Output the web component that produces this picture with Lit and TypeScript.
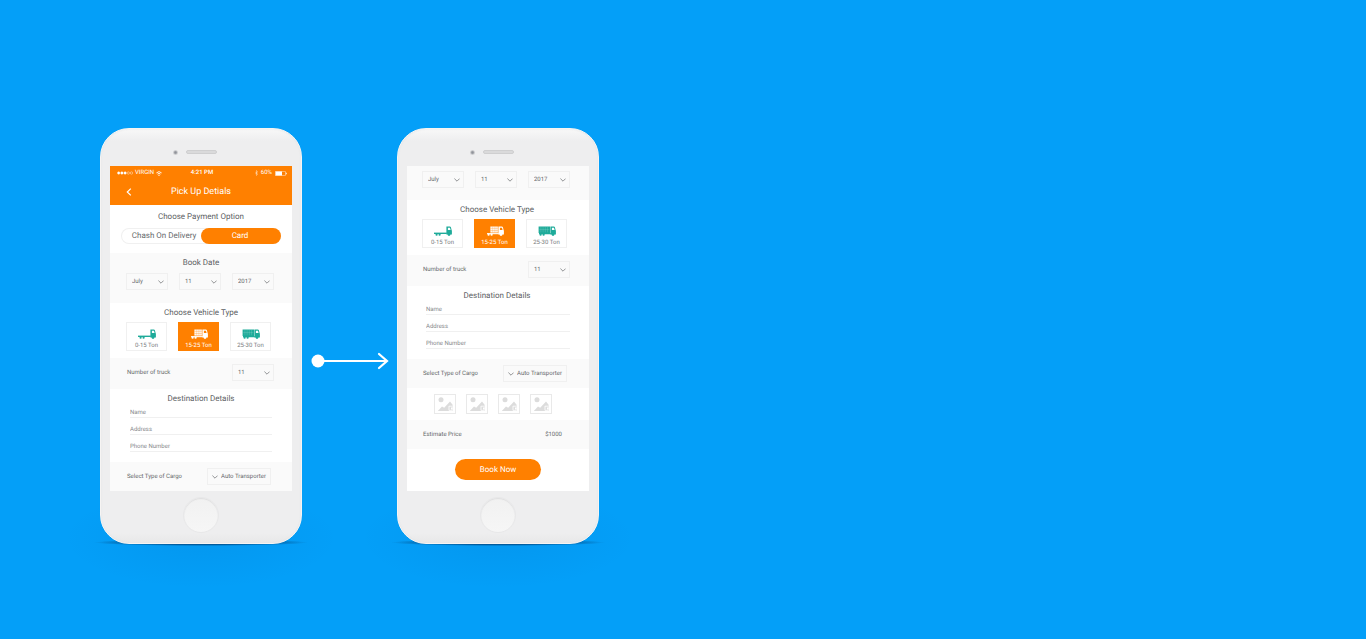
import { LitElement, html, css, svg, nothing } from "lit";
import { customElement, property } from "lit/decorators.js";
import { classMap } from "lit/directives/class-map.js";

const chevron = html`<svg class="chevron" viewBox="0 0 6 4" aria-hidden="true">
  <path d="M0.4 0.6 3 3.2 5.6 0.6" fill="none" stroke="currentColor" stroke-width="0.8" />
</svg>`;

const cab = svg`
  <path fill-rule="evenodd" d="M12.4 0.4h3.4c.6 0 .9.2 1.1.8l.7 2.7c.2.3.3.6.3 1v3.5h-5.5zM13.9 1.7v2.2h2.7l-.5-1.7c-.1-.4-.3-.5-.6-.5z" />
  <circle cx="15" cy="8.5" r="1.4" />`;

const wheels = svg`
  <circle cx="2.6" cy="8.7" r="1.1" />
  <circle cx="5.6" cy="8.7" r="1.1" />`;

const trucks = {
  flat: svg`<path d="M0 6.6h12.8v1.4H0z" />${wheels}${cab}`,
  box: svg`<path d="M1 7.1h11.8v1.1H1z" />
    <path d="M4.4 0.5h7.4v6.1H4.4z" />
    <path d="M6.3 0.5v6.1M8.2 0.5v6.1M10 0.5v6.1M4.4 2.4h7.4M4.4 4.5h7.4" stroke="#ff8000" stroke-opacity="0.55" stroke-width="0.5" />
    ${wheels}${cab}`,
  long: svg`<path d="M0.6 0.4h11.4v6.5H0.6zM1 7.1h11.8v1.1H1z" />
    <path d="M2.9 1v5.3M5.1 1v5.3M7.3 1v5.3M9.5 1v5.3M1.2 3.6h10.2" stroke="#fff" stroke-opacity="0.35" stroke-width="0.4" />
    ${wheels}${cab}`,
};

@customElement("phone-frame")
class PhoneFrame extends LitElement {
  static styles = css`
    :host {
      display: block;
      position: relative;
      flex: none;
      width: 202px;
    }
    .glow,
    .contact {
      position: absolute;
      border-radius: 50%;
    }
    .glow {
      left: -36px;
      right: -36px;
      bottom: -44px;
      height: 100px;
      background: radial-gradient(closest-side, rgba(0, 60, 130, 0.08), rgba(0, 60, 130, 0));
    }
    .contact {
      left: -6px;
      right: -6px;
      bottom: -2px;
      height: 7px;
      background: radial-gradient(closest-side, rgba(0, 50, 100, 0.6) 60%, rgba(0, 50, 100, 0));
    }
    .body {
      position: relative;
      box-sizing: border-box;
      border: 1px solid #f6f4f3;
      border-radius: 29px;
      padding: 0 9px;
      background: linear-gradient(#f8f8f8, #eeeeef 12px, #eeeeef 404px, #e8e8e8);
      box-shadow: inset 0 0 2px #e2e2e2;
    }
    .top {
      display: grid;
      grid-template-columns: 1fr auto 1fr;
      align-items: center;
      column-gap: 8px;
      height: 37px;
      padding-top: 9px;
      box-sizing: border-box;
    }
    .camera {
      justify-self: end;
      width: 5px;
      height: 5px;
      border-radius: 50%;
      background: radial-gradient(#8f9299 20%, #d2d2d4 60%);
    }
    .speaker {
      width: 31px;
      height: 4px;
      box-sizing: border-box;
      border: 1px solid #cfcfd0;
      border-radius: 2px;
      background: #dadadb;
    }
    .screen {
      height: 325px;
      overflow: hidden;
      background: #fff;
    }
    .bottom {
      display: grid;
      place-items: center;
      height: 52px;
      padding-bottom: 4px;
      box-sizing: border-box;
    }
    .home {
      width: 36px;
      height: 36px;
      padding: 0;
      box-sizing: border-box;
      border: 1px solid #e8e8e9;
      border-radius: 50%;
      background: linear-gradient(#f1f1f1, #f6f6f6);
      box-shadow: inset 0 1px 1px #dededf;
    }
  `;

  render() {
    return html`
      <div class="glow"></div>
      <div class="contact"></div>
      <div class="body">
        <div class="top"><span class="camera"></span><span class="speaker"></span></div>
        <div class="screen"><slot></slot></div>
        <div class="bottom"><button class="home" aria-label="Home"></button></div>
      </div>
    `;
  }
}

@customElement("booking-form")
class BookingForm extends LitElement {
  @property({ type: Boolean, reflect: true }) scrolled = false;

  static styles = css`
    :host {
      --lead: 16px;
      --trail: 18px;
      display: block;
      color: #66696c;
      font: 6px/8px Roboto, sans-serif;
      text-rendering: geometricPrecision;
    }
    :host([scrolled]) {
      --lead: 15px;
      --trail: 19px;
    }
    * {
      box-sizing: border-box;
    }
    input,
    select,
    button {
      font: inherit;
      color: inherit;
      text-rendering: inherit;
    }
    header {
      background: #ff8000;
      color: #fff;
    }
    .status {
      display: grid;
      grid-template-columns: 1fr auto 1fr;
      align-items: center;
      height: 14px;
      padding: 0 5px 0 7px;
    }
    .carrier,
    .power {
      display: flex;
      align-items: center;
      gap: 2px;
    }
    .power {
      justify-content: flex-end;
      gap: 3px;
    }
    .clock {
      font-weight: 500;
    }
    .dots {
      width: 16px;
      height: 4px;
    }
    .wifi {
      width: 6px;
      height: 5px;
    }
    .bluetooth {
      width: 3px;
      height: 6px;
    }
    .battery {
      width: 12px;
      height: 5px;
    }
    .nav {
      display: grid;
      grid-template-columns: 38px 1fr 38px;
      align-items: center;
      height: 25px;
      padding-bottom: 2px;
    }
    .back {
      display: grid;
      place-items: center;
      padding: 0;
      border: 0;
      background: none;
    }
    .back svg {
      width: 6px;
      height: 8px;
    }
    h1 {
      margin: 0;
      text-align: center;
      font-weight: 400;
      font-size: 9px;
      line-height: 12px;
    }
    h2 {
      margin: 0;
      text-align: center;
      font-weight: 400;
      font-size: 8px;
      line-height: 10px;
      color: #5c6063;
    }
    section {
      padding: 5px 0 0 var(--lead);
    }
    section h2 {
      padding-right: calc(var(--trail) - 2px);
    }
    .tint {
      background: #fafafa;
    }
    .payment {
      padding: 7px 11px 9px;
    }
    .payment h2 {
      padding: 0;
    }
    .toggle {
      display: grid;
      grid-template-columns: 1fr 1fr;
      height: 16px;
      margin-top: 6px;
      border-radius: 8px;
      box-shadow: inset 0 0 0 1px #f0f0f0;
      font-size: 8px;
    }
    .toggle label {
      display: grid;
      place-items: center;
      padding-left: 6px;
      border-radius: 8px;
    }
    .toggle .on {
      padding: 0 2px 0 0;
      background: #ff8000;
      color: #fff;
    }
    input[type="radio"] {
      position: absolute;
      opacity: 0;
      width: 1px;
      height: 1px;
      margin: 0;
    }
    .date {
      padding-bottom: 13px;
    }
    .date h2 {
      margin-bottom: 5px;
    }
    :host([scrolled]) .date {
      padding-bottom: 12px;
    }
    .row {
      display: flex;
      gap: 11px;
    }
    .pick {
      display: grid;
      align-items: center;
      width: 42px;
      height: 17px;
      border: 1px solid #f0f0f0;
    }
    .pick select,
    .pick .chevron {
      grid-area: 1 / 1;
    }
    .pick select {
      appearance: none;
      width: 100%;
      height: 15px;
      padding: 1px 0 0 5px;
      border: 0;
      background: none;
    }
    .chevron {
      width: 6px;
      height: 4px;
      justify-self: end;
      margin-right: 3px;
      color: #777a7c;
      pointer-events: none;
    }
    .pick.cargo {
      width: 64px;
      margin-right: 3px;
    }
    .cargo .chevron {
      justify-self: start;
      margin-left: 4px;
    }
    .cargo select {
      padding-left: 13px;
    }
    .vehicle {
      padding-bottom: 7px;
    }
    .vehicle .row {
      margin-top: 4px;
    }
    .truck {
      display: flex;
      flex-direction: column;
      align-items: center;
      width: 41px;
      height: 29px;
      padding-top: 6px;
      border: 1px solid #f0f0f0;
      color: #7a7d80;
      white-space: nowrap;
    }
    .truck svg {
      width: 18px;
      height: 10px;
      margin-bottom: 3px;
      fill: #1fab9a;
    }
    .truck.on {
      border-color: #ff8000;
      background: #ff8000;
      color: #fff;
    }
    .truck.on svg {
      fill: #fff;
    }
    .line {
      display: flex;
      align-items: center;
      justify-content: space-between;
      height: 31px;
      padding: 0 var(--trail) 2px calc(var(--lead) + 1px);
    }
    .line.short {
      height: 29px;
      padding-bottom: 0;
    }
    .fields {
      display: grid;
      gap: 3px;
      padding: 0 4px 10px 4px;
      margin-right: var(--lead);
    }
    .fields input {
      width: 100%;
      height: 14px;
      padding: 4px 0 0;
      border: 0;
      border-bottom: 1px solid #f0f0f0;
      border-radius: 0;
      background: none;
    }
    .fields input::placeholder {
      color: #85888a;
      opacity: 1;
    }
    .thumbs {
      display: flex;
      justify-content: center;
      gap: 10px;
      padding: 6px 11px 6px 0;
    }
    .thumbs svg {
      width: 22px;
      height: 20px;
    }
    .line .price {
      padding-right: 8px;
    }
    .submit {
      display: block;
      width: 86px;
      height: 21px;
      margin: 10px auto 0;
      padding: 0;
      border: 0;
      border-radius: 11px;
      background: #ff8000;
      color: #fff;
      font-size: 8px;
    }
  `;

  private pick(label: string, value: string, kind = "") {
    return html`<label class="pick ${kind}">
      <select aria-label=${label}><option>${value}</option></select>${chevron}
    </label>`;
  }

  private truck(kind: keyof typeof trucks, label: string, on = false) {
    return html`<label class=${classMap({ truck: true, on })}>
      <input type="radio" name="vehicle" .checked=${on} />
      <svg viewBox="0 0 18 10" aria-hidden="true">${trucks[kind]}</svg>
      ${label}
    </label>`;
  }

  private top() {
    return html`
      <header>
        <div class="status">
          <span class="carrier">
            <svg class="dots" viewBox="0 0 16 4" fill="#fff" stroke="#fff" stroke-width="0.4">
              <circle cx="1.7" cy="2" r="1.2" /><circle cx="4.9" cy="2" r="1.2" /><circle cx="8.1" cy="2" r="1.2" />
              <circle cx="11.3" cy="2" r="1.2" fill="none" /><circle cx="14.5" cy="2" r="1.2" fill="none" />
            </svg>
            VIRGIN
            <svg class="wifi" viewBox="0 0 6 5" fill="none" stroke="#fff" stroke-width="0.9">
              <path d="M0.4 1.9a3.7 3.7 0 0 1 5.2 0M1.5 3.1a2.1 2.1 0 0 1 3 0" /><circle cx="3" cy="4.2" r="0.3" />
            </svg>
          </span>
          <span class="clock">4:21 PM</span>
          <span class="power">
            <svg class="bluetooth" viewBox="0 0 3 6" fill="none" stroke="#fff" stroke-width="0.4">
              <path d="M0.2 1.7 2.7 4.2 1.5 5.5v-5l1.2 1.3L0.2 4.3" />
            </svg>
            60%
            <svg class="battery" viewBox="0 0 12 5">
              <rect x="0.3" y="0.3" width="10.2" height="4.4" rx="0.8" fill="none" stroke="#fff" stroke-width="0.5" />
              <path d="M0.6 0.6h6.4v3.8h-6.4zM11 1.7h.7v1.6H11z" fill="#fff" />
            </svg>
          </span>
        </div>
        <div class="nav">
          <button class="back" aria-label="Back">
            <svg viewBox="0 0 6 8"><path d="M4.8 0.6 1.3 4l3.5 3.4" fill="none" stroke="#fff" stroke-width="1.2" /></svg>
          </button>
          <h1>Pick Up Detials</h1>
        </div>
      </header>
      <section class="payment">
        <h2>Choose Payment Option</h2>
        <div class="toggle">
          <label><input type="radio" name="payment" />Chash On Delivery</label>
          <label class="on"><input type="radio" name="payment" checked />Card</label>
        </div>
      </section>
    `;
  }

  private bottom() {
    return html`
      <div class="thumbs">
        ${[0, 1, 2, 3].map(
          () => html`<svg viewBox="0 0 22 20" aria-hidden="true">
            <rect x="0.5" y="0.5" width="21" height="19" fill="#fff" stroke="#e9e9e9" />
            <g fill="#dcdcdc">
              <circle cx="7" cy="5.8" r="2.5" />
              <path d="M3.8 17 8 12.4l2.2 1.4L16 7.4l2.6 3.4V17z" />
            </g>
            <path d="M15 12.2h3.4M15 12v4.4h3.4" fill="none" stroke="#fff" stroke-width="0.8" />
            <path d="M17 13.4h1.6v2H17z" fill="#fff" />
          </svg>`
        )}
      </div>
      <div class="line short tint"><span>Estimate Price</span><span class="price">$1000</span></div>
      <button class="submit">Book Now</button>
    `;
  }

  render() {
    return html`
      ${this.scrolled ? nothing : this.top()}
      <section class="date tint">
        ${this.scrolled ? nothing : html`<h2>Book Date</h2>`}
        <div class="row">${this.pick("Month", "July")}${this.pick("Day", "11")}${this.pick("Year", "2017")}</div>
      </section>
      <section class="vehicle">
        <h2>Choose Vehicle Type</h2>
        <div class="row">
          ${this.truck("flat", "0-15 Ton")}${this.truck("box", "15-25 Ton", true)}${this.truck("long", "25-30 Ton")}
        </div>
      </section>
      <div class="line tint"><span>Number of truck</span>${this.pick("Number of truck", "11")}</div>
      <section>
        <h2>Destination Details</h2>
        <div class="fields">
          ${["Name", "Address", "Phone Number"].map(
            (name) => html`<input type="text" aria-label=${name} placeholder=${name} />`
          )}
        </div>
      </section>
      <div class="line short tint">
        <span>Select Type of Cargo</span>${this.pick("Select Type of Cargo", "Auto Transporter", "cargo")}
      </div>
      ${this.scrolled ? this.bottom() : nothing}
    `;
  }
}

@customElement("app-root")
class AppRoot extends LitElement {
  static styles = css`
    :host {
      display: block;
      min-height: 100vh;
      box-sizing: border-box;
      padding: 128px 100px 0;
      background: #049ff8;
    }
    .flow {
      display: flex;
      align-items: center;
    }
    .arrow {
      flex: none;
      width: 95px;
      height: 18px;
      padding-top: 50px;
    }
  `;

  render() {
    return html`
      <main class="flow">
        <phone-frame><booking-form></booking-form></phone-frame>
        <svg class="arrow" viewBox="0 0 95 18" fill="none" stroke="#fff" stroke-width="2.2" aria-hidden="true">
          <circle cx="16" cy="9" r="6.5" fill="#fff" stroke="none" />
          <path d="M16 9h69" />
          <path d="M77 2l8 7-8 7" stroke-linecap="round" />
        </svg>
        <phone-frame><booking-form scrolled></booking-form></phone-frame>
      </main>
    `;
  }
}
